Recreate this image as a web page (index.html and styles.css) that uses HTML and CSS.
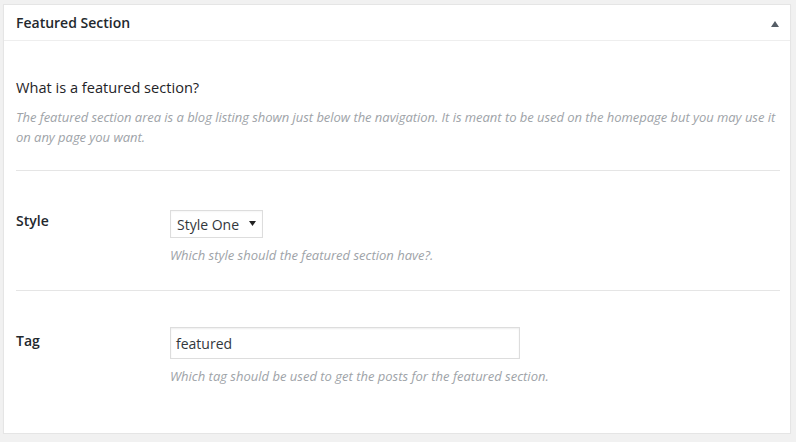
FILE: index.html
```html
<!DOCTYPE html>
<html>
<head>
<meta charset="utf-8">
<link rel="stylesheet" href="styles.css">
</head>
<body>
<div class="postbox">
  <div class="postbox-header">
    <h2 class="postbox-title">Featured Section</h2>
    <span class="toggle"><svg width="8" height="6" viewBox="0 0 8 6"><path d="M0 6 L4 0 L8 6 Z" fill="#555d66"/></svg></span>
  </div>
  <div class="inside">
    <div class="intro">
      <h3 class="intro-title">What is a featured section?</h3>
      <p class="description">The featured section area is a blog listing shown just below the navigation. It is meant to be used on the homepage but you may use it on any page you want.</p>
    </div>
    <div class="field-row">
      <div class="field-label">Style</div>
      <div class="field-control">
        <div class="select">Style One <svg class="select-arrow" width="7" height="5" viewBox="0 0 7 5"><path d="M0 0 L7 0 L3.5 5 Z" fill="#222"/></svg></div>
        <p class="description">Which style should the featured section have?.</p>
      </div>
    </div>
    <div class="field-row last">
      <div class="field-label">Tag</div>
      <div class="field-control">
        <div class="text-input">featured</div>
        <p class="description">Which tag should be used to get the posts for the featured section.</p>
      </div>
    </div>
  </div>
</div>
</body>
</html>
```

FILE: styles.css
```css
html, body {
  margin: 0;
  padding: 0;
  background: #f1f1f1;
  font-family: "Open Sans", "Liberation Sans", sans-serif;
  color: #23282d;
}

.postbox {
  margin: 4px 4px 0 3px;
  width: 788px;
  height: 430px;
  box-sizing: border-box;
  background: #fff;
  border: 1px solid #e5e5e5;
  box-shadow: 0 1px 1px rgba(0, 0, 0, 0.04);
}

.postbox-header {
  display: flex;
  align-items: center;
  justify-content: space-between;
  height: 35px;
  border-bottom: 1px solid #eee;
  padding: 0 11px 0 12px;
}

.postbox-title {
  margin: 0;
  font-size: 14px;
  font-weight: 600;
  color: #23282d;
  line-height: 20px;
}

.toggle {
  display: flex;
  align-items: center;
  padding-top: 3px;
}

.inside {
  padding: 0 10px 0 12px;
}

.intro {
  padding-top: 36px;
  padding-bottom: 23px;
  border-bottom: 1px solid #e5e5e5;
}

.intro-title {
  margin: 0;
  font-size: 14.6px;
  font-weight: 400;
  line-height: 20px;
  color: #1f2428;
}

.description {
  margin: 0;
  font-size: 13px;
  font-style: italic;
  line-height: 20px;
  color: #9ea3a8;
}

.intro .description {
  margin-top: 10px;
  letter-spacing: -0.04px;
}

.field-row {
  display: flex;
  padding-top: 39px;
  padding-bottom: 25px;
  border-bottom: 1px solid #e5e5e5;
}

.field-row.last {
  border-bottom: none;
  padding-top: 36px;
}

.field-label {
  width: 154px;
  flex: none;
  font-size: 14px;
  font-weight: 600;
  line-height: 20px;
  padding-top: 1px;
  color: #23282d;
}

.field-row.last .field-label {
  padding-top: 4px;
}

.field-control {
  display: flex;
  flex-direction: column;
  align-items: flex-start;
}

.select {
  display: flex;
  align-items: center;
  height: 28px;
  box-sizing: border-box;
  width: 93px;
  padding: 0 6px 0 6px;
  border: 1px solid #ddd;
  font-size: 14px;
  color: #32373c;
  justify-content: space-between;
  box-shadow: inset 0 1px 2px rgba(0, 0, 0, 0.04);
}

.select-arrow {
  margin-top: -2px;
}

.text-input {
  display: flex;
  align-items: center;
  width: 350px;
  height: 32px;
  box-sizing: border-box;
  padding: 0 5px;
  border: 1px solid #ddd;
  font-size: 14px;
  color: #32373c;
  box-shadow: inset 0 1px 2px rgba(0, 0, 0, 0.07);
}

.field-control .description {
  margin-top: 7px;
}
```
